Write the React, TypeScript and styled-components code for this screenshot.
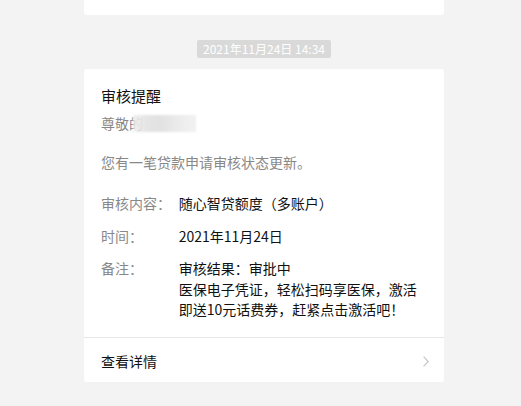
import { FunctionComponent } from "react";
import styled, { createGlobalStyle } from "styled-components";

const GlobalStyle = createGlobalStyle`
  html, body {
    margin: 0;
    padding: 0;
    background: #f3f3f3;
  }
  body {
    font-family: "Noto Sans CJK SC", "Noto Sans", sans-serif;
    -webkit-font-smoothing: antialiased;
  }
`;

const Page = styled.main`
  width: 521px;
  height: 406px;
  overflow: hidden;
  background: #f3f3f3;
`;

const Column = styled.div`
  width: 360px;
  margin-left: 84px;
  display: flex;
  flex-direction: column;
  align-items: stretch;
`;

const PrevCard = styled.div`
  height: 15px;
  background: #fff;
  border-radius: 0 0 3px 3px;
`;

const Stamp = styled.div`
  align-self: center;
  margin-top: 25px;
  height: 18px;
  padding: 0 6px;
  display: flex;
  align-items: center;
  background: #d9d9d9;
  border-radius: 2px;
  color: #fff;
  font-size: 12px;
  line-height: 18px;
`;

const Card = styled.section`
  margin-top: 11px;
  background: #fff;
  border-radius: 3px;
  overflow: hidden;
`;

const Body = styled.div`
  padding: 17px 17px 17.5px;
`;

const Title = styled.div`
  font-size: 15px;
  line-height: 20px;
  color: #111;
`;

const Greeting = styled.div`
  margin-top: 7px;
  font-size: 14px;
  line-height: 20px;
  color: #888;
  display: flex;
  align-items: center;
`;

// blurred-out customer name, lies partly over the last glyph
const Masked = styled.span`
  display: inline-block;
  width: 63px;
  height: 17px;
  margin-left: -10px;
  background: linear-gradient(
    to right,
    rgba(236, 236, 236, 0.85) 0%,
    #e4e4e4 25%,
    #e2e2e2 45%,
    #e9e9e9 65%,
    #eeeeef 82%,
    #f1f1f3 100%
  );
  filter: blur(0.8px);
`;

const Intro = styled.div`
  margin-top: 19px;
  font-size: 14px;
  line-height: 20px;
  color: #888;
`;

const Fields = styled.dl`
  margin: 21px 0 0;
  display: grid;
  grid-template-columns: 77.7px 1fr;
  row-gap: 12px;
  font-size: 14px;
  line-height: 20.5px;
`;

const Label = styled.dt`
  margin: 0;
  color: #888;
`;

const Value = styled.dd`
  margin: 0;
  color: #111;
`;

const Line = styled.span`
  display: block;
`;

const Footer = styled.div`
  height: 45px;
  border-top: 1px solid #e6e6e6;
  padding: 2px 15px 0 17px;
  box-sizing: border-box;
  display: flex;
  align-items: center;
  justify-content: space-between;
  font-size: 14px;
  color: #111;
`;

const Chevron = () => (
  <svg width="6" height="11" viewBox="0 0 6 11">
    <polyline
      points="0.6,0.6 5.2,5.5 0.6,10.4"
      fill="none"
      stroke="#c4c4c4"
      strokeWidth="1.1"
    />
  </svg>
);

const App: FunctionComponent = () => {
  return <>
    <GlobalStyle/>
    <Page>
      <Column>
        <PrevCard/>
        <Stamp>2021年11月24日 14:34</Stamp>
        <Card>
          <Body>
            <Title>审核提醒</Title>
            <Greeting>尊敬的<Masked/></Greeting>
            <Intro>您有一笔贷款申请审核状态更新。</Intro>
            <Fields>
              <Label>审核内容：</Label>
              <Value>随心智贷额度（多账户）</Value>
              <Label>时间：</Label>
              <Value>2021年11月24日</Value>
              <Label>备注：</Label>
              <Value>
                <Line>审核结果：审批中</Line>
                <Line>医保电子凭证，轻松扫码享医保，激活</Line>
                <Line>即送10元话费券，赶紧点击激活吧！</Line>
              </Value>
            </Fields>
          </Body>
          <Footer>
            <span>查看详情</span>
            <Chevron/>
          </Footer>
        </Card>
      </Column>
    </Page>
  </>;
};

export default App;
